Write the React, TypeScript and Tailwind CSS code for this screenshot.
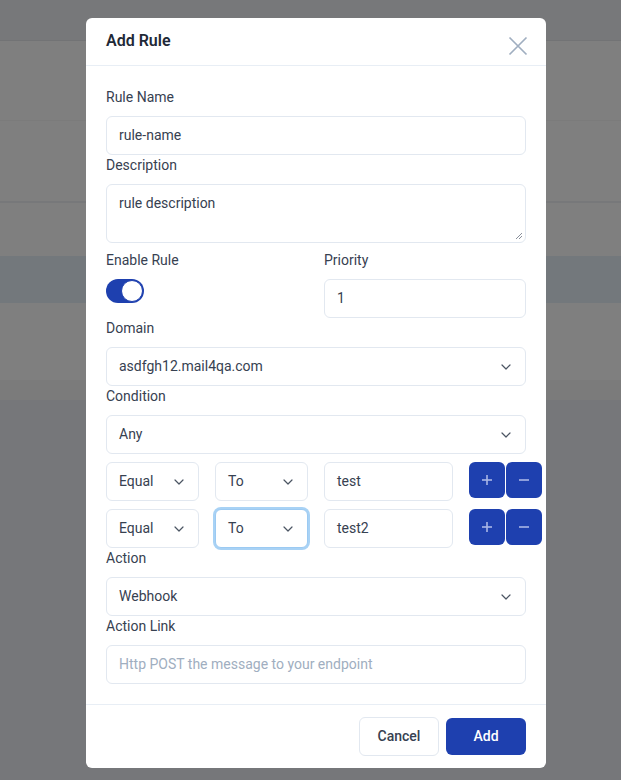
import React from "react";

const Chevron = ({ className = "" }: { className?: string }) => (
  <svg width="10" height="6" viewBox="0 0 10 6" fill="none" className={className}>
    <path d="M1 1l4 4 4-4" stroke="#4b5563" strokeWidth="1.2" strokeLinecap="round" strokeLinejoin="round" />
  </svg>
);

const Label = ({ children }: { children: React.ReactNode }) => (
  <div className="text-[14px] leading-5 text-[#374151] mb-[9px]">{children}</div>
);

const Select = ({ value, className = "", focus = false }: { value: string; className?: string; focus?: boolean }) => (
  <div
    className={`shrink-0 h-[39px] rounded-md bg-white border flex items-center justify-between pl-3 pr-[14px] text-[14px] text-[#374151] ${
      focus ? "border-[#9ccaf2] shadow-[0_0_0_2px_#a8d2f5]" : "border-[#e2e8f0]"
    } ${className}`}
  >
    <span>{value}</span>
    <Chevron />
  </div>
);

const Input = ({ value, placeholder, className = "" }: { value?: string; placeholder?: string; className?: string }) => (
  <div className={`shrink-0 h-[39px] rounded-md bg-white border border-[#e2e8f0] flex items-center px-3 text-[14px] ${className}`}>
    {value ? <span className="text-[#374151]">{value}</span> : <span className="text-[#a0aec0]">{placeholder}</span>}
  </div>
);

const IconBtn = ({ kind }: { kind: "plus" | "minus" }) => (
  <div className="shrink-0 w-9 h-9 rounded-md bg-[#1e40af] flex items-center justify-center">
    <svg width="12" height="12" viewBox="0 0 12 12">
      {kind === "plus" && <path d="M6 1v10" stroke="#a9b6e6" strokeWidth="1.6" />}
      <path d="M1 6h10" stroke="#a9b6e6" strokeWidth="1.6" />
    </svg>
  </div>
);

const CondRow = ({ text, focus }: { text: string; focus?: boolean }) => (
  <div className="flex items-start w-[436px]">
    <Select value="Equal" className="w-[93px]" />
    <Select value="To" className="w-[93px] ml-4" focus={focus} />
    <Input value={text} className="w-[129px] ml-4" />
    <div className="shrink-0 flex ml-4 gap-px">
      <IconBtn kind="plus" />
      <IconBtn kind="minus" />
    </div>
  </div>
);

export default function App() {
  return (
    <div className="relative w-[621px] h-[780px] overflow-hidden" style={{ fontFamily: "Roboto, 'Liberation Sans', sans-serif" }}>
      {/* dimmed background page */}
      <div className="flex flex-col w-full h-full">
        <div className="h-[41px] bg-[#77787a] border-b border-[#727375]" />
        <div className="h-[80px] bg-[#7f7f7f] border-b border-[#7b7b7b]" />
        <div className="h-[80px] bg-[#7f7f7f]" />
        <div className="h-[2px] bg-[#77787a]" />
        <div className="h-[53px] bg-[#7f7f7f]" />
        <div className="h-[47px] bg-[#73787c]" />
        <div className="h-[77px] bg-[#7f7f7f]" />
        <div className="h-[20px] bg-[#7b7b7b]" />
        <div className="flex-1 bg-[#76777a]" />
      </div>

      {/* modal */}
      <div className="absolute left-[86px] top-[18px] w-[460px] h-[750px] bg-white rounded-md flex flex-col">
        <div className="h-[48px] shrink-0 border-b border-[#e8eef5] flex items-start justify-between pl-5 pr-[18px]">
          <div className="text-[16px] font-semibold text-[#1f2937] mt-[13px] leading-5">Add Rule</div>
          <svg width="20" height="20" viewBox="0 0 20 20" className="mt-[18px]">
            <path d="M1.5 1.5l17 17M18.5 1.5l-17 17" stroke="#a0aec0" strokeWidth="1.7" />
          </svg>
        </div>

        <div className="flex-1 px-5 pt-[21px]">
          <Label>Rule Name</Label>
          <Input value="rule-name" />

          <Label>Description</Label>
          <div className="relative h-[59px] rounded-md border border-[#e2e8f0] px-3 pt-[8px] text-[14px] text-[#374151]">
            rule description
            <svg width="8" height="8" viewBox="0 0 8 8" className="absolute right-[2px] bottom-[2px]">
              <path d="M7 1L1 7M7 4L4 7" stroke="#6b7280" strokeWidth="0.8" />
            </svg>
          </div>

          <div className="grid grid-cols-2 gap-x-4 mt-[7px]">
            <div>
              <Label>Enable Rule</Label>
              <div className="mt-[4px] w-[38px] h-[24px] rounded-full bg-[#1e40af] relative">
                <div className="absolute right-[1px] top-[1px] w-[22px] h-[22px] rounded-full bg-white border-[1.5px] border-[#1e40af]" />
              </div>
            </div>
            <div>
              <Label>Priority</Label>
              <Input value="1" />
            </div>
          </div>

          <Label>Domain</Label>
          <Select value="asdfgh12.mail4qa.com" />

          <Label>Condition</Label>
          <Select value="Any" />

          <div className="mt-2 flex flex-col gap-2">
            <CondRow text="test" />
            <CondRow text="test2" focus />
          </div>

          <Label>Action</Label>
          <Select value="Webhook" />

          <Label>Action Link</Label>
          <Input placeholder="Http POST the message to your endpoint" />
        </div>

        <div className="h-[64px] shrink-0 border-t border-[#e8eef5] flex items-start justify-end gap-[7px] px-5 pt-[12px]">
          <div className="w-[80px] h-[39px] rounded-md border border-[#e2e8f0] flex items-center justify-center text-[14px] font-medium text-[#374151]">
            Cancel
          </div>
          <div className="w-[80px] h-[37px] mt-px rounded-md bg-[#1e40af] flex items-center justify-center text-[14px] font-medium text-white">
            Add
          </div>
        </div>
      </div>
    </div>
  );
}
